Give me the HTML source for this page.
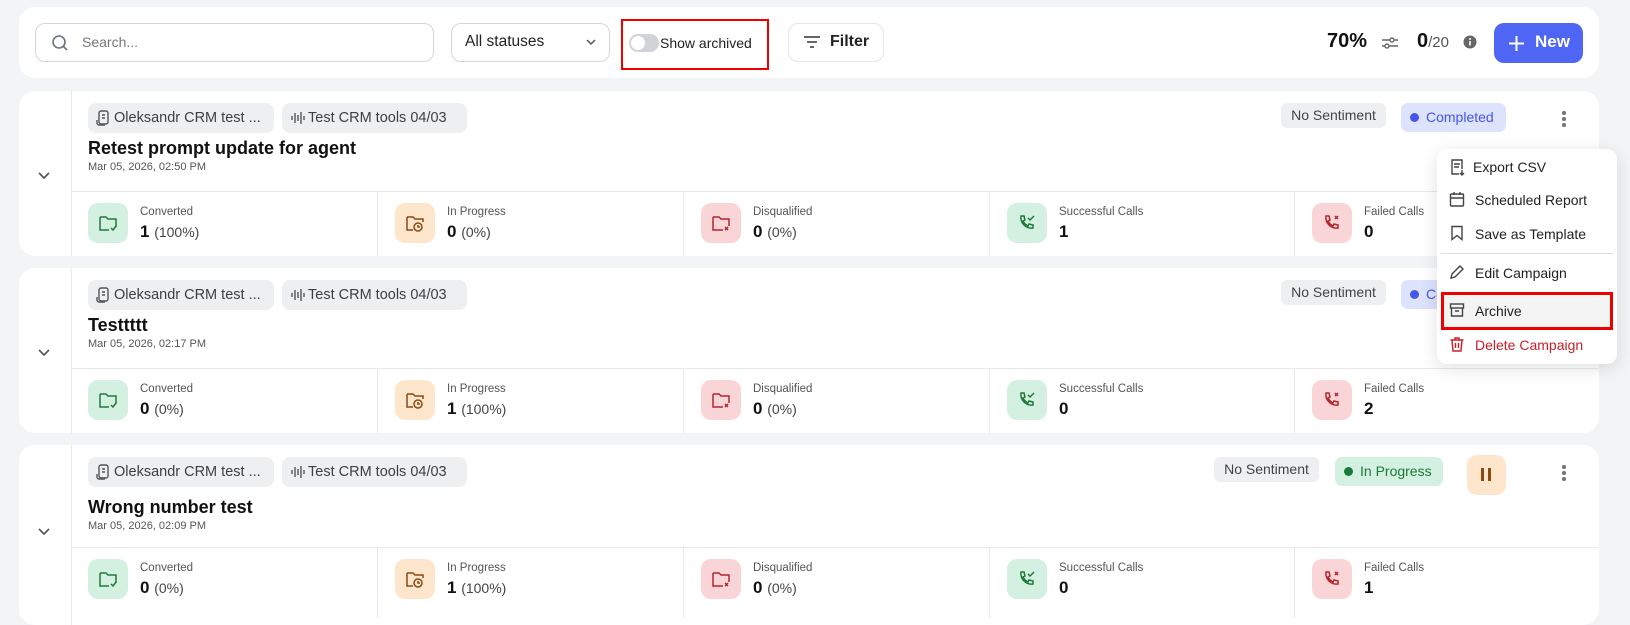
<!DOCTYPE html>
<html><head><meta charset="utf-8"><style>
*{box-sizing:border-box;margin:0;padding:0}
body{width:1630px;height:593px;overflow:hidden;background:#f3f4f6;font-family:"Liberation Sans",sans-serif;color:#111;position:relative}
.abs{position:absolute}
.top{left:19px;top:7px;width:1580px;height:71px;background:#fff;border-radius:16px}
.inp{border:1px solid #d4d6da;border-radius:10px;background:#fff}
.card{left:19px;width:1580px;height:165px;background:#fff;border-radius:16px;overflow:hidden}
.card .lc{position:absolute;left:52px;top:0;bottom:0;border-left:1px solid #e8e9ec}
.card .hl{position:absolute;left:52px;right:0;top:100px;border-top:1px solid #e8e9ec}
.chip{position:absolute;top:12px;height:30px;background:#eeeff1;border-radius:8px;font-size:14.5px;color:#3c3f45;line-height:30px;padding-left:26px}
.chip svg{position:absolute;left:8px;top:7px}
.title{position:absolute;left:69px;top:47px;font-size:18px;font-weight:bold}
.date{position:absolute;left:69px;top:70px;font-size:11px;color:#555}
.col{position:absolute;top:101px;height:70px;border-left:1px solid #e8e9ec}
.ico{position:absolute;left:17px;top:11px;width:40px;height:40px;border-radius:10px}
.ico svg{position:absolute;left:10px;top:10px}
.lab{position:absolute;left:69px;top:14px;font-size:11.5px;color:#555;white-space:nowrap}
.val{position:absolute;left:69px;top:30px;font-size:17px;font-weight:bold;white-space:nowrap}
.val span{font-weight:normal;font-size:14px;color:#444}
.g{background:#d3f0e0}.o{background:#fde6cc}.r{background:#f9d5d7}
.sent{position:absolute;top:12px;height:25px;line-height:25px;background:#eeeff1;border-radius:6px;font-size:14px;color:#444;text-align:center}
.st{position:absolute;top:12px;height:29px;line-height:29px;border-radius:7px;font-size:14px;padding-left:25px}
.st:before{content:"";position:absolute;left:9px;top:10px;width:9px;height:9px;border-radius:50%;background:currentColor}
.dots{position:absolute;left:1543px;top:20px;width:4px}
.dots i{display:block;width:3.5px;height:3.5px;border-radius:50%;background:#777;margin-bottom:2.5px}
.chev{position:absolute;left:18px;top:80px}
.menu{left:1437px;top:149px;width:180px;height:215px;background:#fff;border-radius:10px;box-shadow:0 4px 18px rgba(0,0,0,.12)}
.mi{position:absolute;left:0;font-size:14px;color:#222;padding-left:38px;height:20px;line-height:20px}
.mi svg{position:absolute;left:12px;top:1px}
</style></head><body>
<div class="abs top"></div>
<div class="abs inp" style="left:35px;top:23px;width:399px;height:39px"></div>
<svg class="abs" style="left:51px;top:34px" width="18" height="18" viewBox="0 0 18 18" fill="none" stroke="#6b7280" stroke-width="1.6"><circle cx="8" cy="8" r="6"/><path d="M12.5 12.5L16 16"/></svg>
<div class="abs" style="left:82px;top:34px;font-size:14px;color:#777">Search...</div>
<div class="abs inp" style="left:451px;top:23px;width:159px;height:39px"></div>
<div class="abs" style="left:465px;top:33px;font-size:15.5px;color:#222">All statuses</div>
<svg class="abs" style="left:585px;top:38px" width="12" height="8" viewBox="0 0 12 8" fill="none" stroke="#555" stroke-width="1.5"><path d="M2 2l4 4 4-4"/></svg>
<div class="abs" style="left:621px;top:19px;width:148px;height:51px;border:2.5px solid #e00"></div>
<div class="abs" style="left:629px;top:34px;width:30px;height:18px;border-radius:9px;background:#d1d3d7"></div>
<div class="abs" style="left:631px;top:36px;width:14px;height:14px;border-radius:50%;background:#fff"></div>
<div class="abs" style="left:660px;top:35px;font-size:14px;color:#222">Show archived</div>
<div class="abs inp" style="left:788px;top:23px;width:96px;height:39px;border-color:#e5e7eb"></div>
<svg class="abs" style="left:803px;top:35px" width="18" height="14" viewBox="0 0 18 14" fill="none" stroke="#333" stroke-width="1.6"><path d="M1 2h16M4 7h10M7 12h4"/></svg>
<div class="abs" style="left:830px;top:33px;font-size:16px;font-weight:bold;color:#222">Filter</div>
<div class="abs" style="left:1327px;top:30px;font-size:20px;font-weight:bold">70%</div>
<svg class="abs" style="left:1381px;top:35px" width="18" height="16" viewBox="0 0 18 16" fill="none" stroke="#666" stroke-width="1.4"><path d="M1 5h16M1 11h16"/><circle cx="11" cy="5" r="2" fill="#fff"/><circle cx="6" cy="11" r="2" fill="#fff"/></svg>
<div class="abs" style="left:1417px;top:30px;font-size:20px;font-weight:bold">0<span style="font-weight:normal;font-size:15px;color:#555">/20</span></div>
<svg class="abs" style="left:1463px;top:35px" width="14" height="14" viewBox="0 0 14 14"><circle cx="7" cy="7" r="6.5" fill="#666"/><rect x="6.2" y="6" width="1.6" height="4.5" fill="#fff"/><circle cx="7" cy="4" r="1" fill="#fff"/></svg>
<div class="abs" style="left:1494px;top:23px;width:89px;height:40px;border-radius:10px;background:#4f66f5"></div>
<svg class="abs" style="left:1508px;top:35px" width="17" height="17" viewBox="0 0 17 17" stroke="#fff" stroke-width="2"><path d="M8.5 1v15M1 8.5h15"/></svg>
<div class="abs" style="left:1535px;top:32px;font-size:17px;font-weight:bold;color:#fff">New</div>

<div class="abs card" style="top:91px">
<div class="lc"></div><div class="hl"></div>
<svg class="chev" width="14" height="9" viewBox="0 0 14 9" fill="none" stroke="#555" stroke-width="1.6"><path d="M2 2l5 5 5-5"/></svg>
<div class="chip" style="left:69px;width:186px"><svg width="14" height="16" viewBox="0 0 14 16" fill="none" stroke="#555" stroke-width="1.4"><rect x="3" y="1" width="9" height="13" rx="2"/><path d="M1 10v3a2 2 0 002 2h6M6 5h3M6 8h3"/></svg>Oleksandr CRM test ...</div>
<div class="chip" style="left:263px;width:185px"><svg width="16" height="16" viewBox="0 0 16 16" stroke="#555" stroke-width="1.4"><path d="M2 6v4M5 3v10M8 5v6M11 2v12M14 6v4"/></svg>Test CRM tools 04/03</div>
<div class="title">Retest prompt update for agent</div>
<div class="date">Mar 05, 2026, 02:50 PM</div>
<div class="sent" style="left:1262px;width:105px">No Sentiment</div>
<div class="st" style="left:1382px;width:105px;background:#dde2fd;color:#4457e6">Completed</div>
<div class="dots"><i></i><i></i><i></i></div>
<div class="col" style="left:52px;border:0"><div class="ico g"><svg width="20" height="20" viewBox="0 0 20 20" fill="none" stroke="#1e7a3c" stroke-width="1.5"><path d="M2 4h6l2 2h8v8M2 4v13h9"/><path d="M13 15l2 2 3-4"/></svg></div><div class="lab">Converted</div><div class="val">1 <span>(100%)</span></div></div>
<div class="col" style="left:358px"><div class="ico o"><svg width="20" height="20" viewBox="0 0 20 20" fill="none" stroke="#8a4a12" stroke-width="1.5"><path d="M2 4h6l2 2h8v3M2 4v13h6"/><circle cx="13" cy="14" r="4"/><path d="M13 12v2h2"/></svg></div><div class="lab">In Progress</div><div class="val">0 <span>(0%)</span></div></div>
<div class="col" style="left:664px"><div class="ico r"><svg width="20" height="20" viewBox="0 0 20 20" fill="none" stroke="#b3262e" stroke-width="1.5"><path d="M2 4h6l2 2h8v7M2 4v13h10"/><path d="M14 14l3 3M17 14l-3 3"/></svg></div><div class="lab">Disqualified</div><div class="val">0 <span>(0%)</span></div></div>
<div class="col" style="left:970px"><div class="ico g"><svg width="20" height="20" viewBox="0 0 20 20" fill="none" stroke="#1e7a3c" stroke-width="1.5"><path d="M4 3l3 0 1 4-2 1c1 2 3 4 5 5l1-2 4 1v3c-7 1-13-5-12-12z"/><path d="M11 5l2 2 4-4"/></svg></div><div class="lab">Successful Calls</div><div class="val">1</div></div>
<div class="col" style="left:1275px"><div class="ico r"><svg width="20" height="20" viewBox="0 0 20 20" fill="none" stroke="#b3262e" stroke-width="1.5"><path d="M4 3l3 0 1 4-2 1c1 2 3 4 5 5l1-2 4 1v3c-7 1-13-5-12-12z"/><path d="M13 3l3 3M16 3l-3 3"/></svg></div><div class="lab">Failed Calls</div><div class="val">0</div></div>
</div>

<div class="abs card" style="top:268px">
<div class="lc"></div><div class="hl"></div>
<svg class="chev" width="14" height="9" viewBox="0 0 14 9" fill="none" stroke="#555" stroke-width="1.6"><path d="M2 2l5 5 5-5"/></svg>
<div class="chip" style="left:69px;width:186px"><svg width="14" height="16" viewBox="0 0 14 16" fill="none" stroke="#555" stroke-width="1.4"><rect x="3" y="1" width="9" height="13" rx="2"/><path d="M1 10v3a2 2 0 002 2h6M6 5h3M6 8h3"/></svg>Oleksandr CRM test ...</div>
<div class="chip" style="left:263px;width:185px"><svg width="16" height="16" viewBox="0 0 16 16" stroke="#555" stroke-width="1.4"><path d="M2 6v4M5 3v10M8 5v6M11 2v12M14 6v4"/></svg>Test CRM tools 04/03</div>
<div class="title">Testtttt</div>
<div class="date">Mar 05, 2026, 02:17 PM</div>
<div class="sent" style="left:1262px;width:105px">No Sentiment</div>
<div class="st" style="left:1382px;width:105px;background:#dde2fd;color:#4457e6">Completed</div>
<div class="dots"><i></i><i></i><i></i></div>
<div class="col" style="left:52px;border:0"><div class="ico g"><svg width="20" height="20" viewBox="0 0 20 20" fill="none" stroke="#1e7a3c" stroke-width="1.5"><path d="M2 4h6l2 2h8v8M2 4v13h9"/><path d="M13 15l2 2 3-4"/></svg></div><div class="lab">Converted</div><div class="val">0 <span>(0%)</span></div></div>
<div class="col" style="left:358px"><div class="ico o"><svg width="20" height="20" viewBox="0 0 20 20" fill="none" stroke="#8a4a12" stroke-width="1.5"><path d="M2 4h6l2 2h8v3M2 4v13h6"/><circle cx="13" cy="14" r="4"/><path d="M13 12v2h2"/></svg></div><div class="lab">In Progress</div><div class="val">1 <span>(100%)</span></div></div>
<div class="col" style="left:664px"><div class="ico r"><svg width="20" height="20" viewBox="0 0 20 20" fill="none" stroke="#b3262e" stroke-width="1.5"><path d="M2 4h6l2 2h8v7M2 4v13h10"/><path d="M14 14l3 3M17 14l-3 3"/></svg></div><div class="lab">Disqualified</div><div class="val">0 <span>(0%)</span></div></div>
<div class="col" style="left:970px"><div class="ico g"><svg width="20" height="20" viewBox="0 0 20 20" fill="none" stroke="#1e7a3c" stroke-width="1.5"><path d="M4 3l3 0 1 4-2 1c1 2 3 4 5 5l1-2 4 1v3c-7 1-13-5-12-12z"/><path d="M11 5l2 2 4-4"/></svg></div><div class="lab">Successful Calls</div><div class="val">0</div></div>
<div class="col" style="left:1275px"><div class="ico r"><svg width="20" height="20" viewBox="0 0 20 20" fill="none" stroke="#b3262e" stroke-width="1.5"><path d="M4 3l3 0 1 4-2 1c1 2 3 4 5 5l1-2 4 1v3c-7 1-13-5-12-12z"/><path d="M13 3l3 3M16 3l-3 3"/></svg></div><div class="lab">Failed Calls</div><div class="val">2</div></div>
</div>

<div class="abs card" style="top:445px;height:180px">
<div class="lc"></div><div class="hl" style="top:102px"></div>
<svg class="chev" style="top:82px" width="14" height="9" viewBox="0 0 14 9" fill="none" stroke="#555" stroke-width="1.6"><path d="M2 2l5 5 5-5"/></svg>
<div class="chip" style="left:69px;width:186px"><svg width="14" height="16" viewBox="0 0 14 16" fill="none" stroke="#555" stroke-width="1.4"><rect x="3" y="1" width="9" height="13" rx="2"/><path d="M1 10v3a2 2 0 002 2h6M6 5h3M6 8h3"/></svg>Oleksandr CRM test ...</div>
<div class="chip" style="left:263px;width:185px"><svg width="16" height="16" viewBox="0 0 16 16" stroke="#555" stroke-width="1.4"><path d="M2 6v4M5 3v10M8 5v6M11 2v12M14 6v4"/></svg>Test CRM tools 04/03</div>
<div class="title" style="top:52px">Wrong number test</div>
<div class="date" style="top:75px">Mar 05, 2026, 02:09 PM</div>
<div class="sent" style="left:1195px;width:105px">No Sentiment</div>
<div class="st" style="left:1316px;width:108px;background:#d3f0e0;color:#1b7a3a">In Progress</div>
<div style="position:absolute;left:1448px;top:10px;width:39px;height:40px;border-radius:10px;background:#fde6cc"><div style="position:absolute;left:14px;top:13px;width:3px;height:13px;background:#8a4a12"></div><div style="position:absolute;left:21px;top:13px;width:3px;height:13px;background:#8a4a12"></div></div>
<div class="dots"><i></i><i></i><i></i></div>
<div class="col" style="left:52px;top:103px;border:0"><div class="ico g"><svg width="20" height="20" viewBox="0 0 20 20" fill="none" stroke="#1e7a3c" stroke-width="1.5"><path d="M2 4h6l2 2h8v8M2 4v13h9"/><path d="M13 15l2 2 3-4"/></svg></div><div class="lab">Converted</div><div class="val">0 <span>(0%)</span></div></div>
<div class="col" style="left:358px;top:103px"><div class="ico o"><svg width="20" height="20" viewBox="0 0 20 20" fill="none" stroke="#8a4a12" stroke-width="1.5"><path d="M2 4h6l2 2h8v3M2 4v13h6"/><circle cx="13" cy="14" r="4"/><path d="M13 12v2h2"/></svg></div><div class="lab">In Progress</div><div class="val">1 <span>(100%)</span></div></div>
<div class="col" style="left:664px;top:103px"><div class="ico r"><svg width="20" height="20" viewBox="0 0 20 20" fill="none" stroke="#b3262e" stroke-width="1.5"><path d="M2 4h6l2 2h8v7M2 4v13h10"/><path d="M14 14l3 3M17 14l-3 3"/></svg></div><div class="lab">Disqualified</div><div class="val">0 <span>(0%)</span></div></div>
<div class="col" style="left:970px;top:103px"><div class="ico g"><svg width="20" height="20" viewBox="0 0 20 20" fill="none" stroke="#1e7a3c" stroke-width="1.5"><path d="M4 3l3 0 1 4-2 1c1 2 3 4 5 5l1-2 4 1v3c-7 1-13-5-12-12z"/><path d="M11 5l2 2 4-4"/></svg></div><div class="lab">Successful Calls</div><div class="val">0</div></div>
<div class="col" style="left:1275px;top:103px"><div class="ico r"><svg width="20" height="20" viewBox="0 0 20 20" fill="none" stroke="#b3262e" stroke-width="1.5"><path d="M4 3l3 0 1 4-2 1c1 2 3 4 5 5l1-2 4 1v3c-7 1-13-5-12-12z"/><path d="M13 3l3 3M16 3l-3 3"/></svg></div><div class="lab">Failed Calls</div><div class="val">1</div></div>
</div>

<div class="abs menu">
<div class="mi" style="top:8px;padding-left:36px"><svg width="16" height="18" viewBox="0 0 16 18" fill="none" stroke="#444" stroke-width="1.4"><path d="M10 16H3V2h10v9M5 6h6M5 9h5"/><path d="M13 12v5M11 15l2 2 2-2"/></svg>Export CSV</div>
<div class="mi" style="top:41px"><svg width="16" height="16" viewBox="0 0 16 16" fill="none" stroke="#444" stroke-width="1.4"><rect x="1.5" y="3" width="13" height="12" rx="1"/><path d="M1.5 7h13M5 1v3M11 1v3"/></svg>Scheduled Report</div>
<div class="mi" style="top:75px"><svg width="16" height="16" viewBox="0 0 16 16" fill="none" stroke="#444" stroke-width="1.4"><path d="M3 1.5h10v13l-5-4-5 4z"/></svg>Save as Template</div>
<div style="position:absolute;left:4px;right:4px;top:104px;border-top:1px solid #ddd"></div>
<div class="mi" style="top:114px"><svg width="16" height="16" viewBox="0 0 16 16" fill="none" stroke="#444" stroke-width="1.4"><path d="M2 14l1-4 8-8 3 3-8 8z"/></svg>Edit Campaign</div>
<div style="position:absolute;left:4px;top:143px;width:172px;height:38px;background:#f4f4f5;border:3px solid #e00"></div>
<div class="mi" style="top:152px"><svg width="16" height="16" viewBox="0 0 16 16" fill="none" stroke="#444" stroke-width="1.4"><rect x="1.5" y="2" width="13" height="4"/><path d="M2.5 6v8h11V6M6 9h4"/></svg>Archive</div>
<div class="mi" style="top:186px;color:#c81e2a"><svg width="16" height="16" viewBox="0 0 16 16" fill="none" stroke="#c81e2a" stroke-width="1.4"><path d="M1.5 4h13M6 4V2h4v2M3 4l1 11h8l1-11M6.5 7v5M9.5 7v5"/></svg>Delete Campaign</div>
</div>
</body></html>
